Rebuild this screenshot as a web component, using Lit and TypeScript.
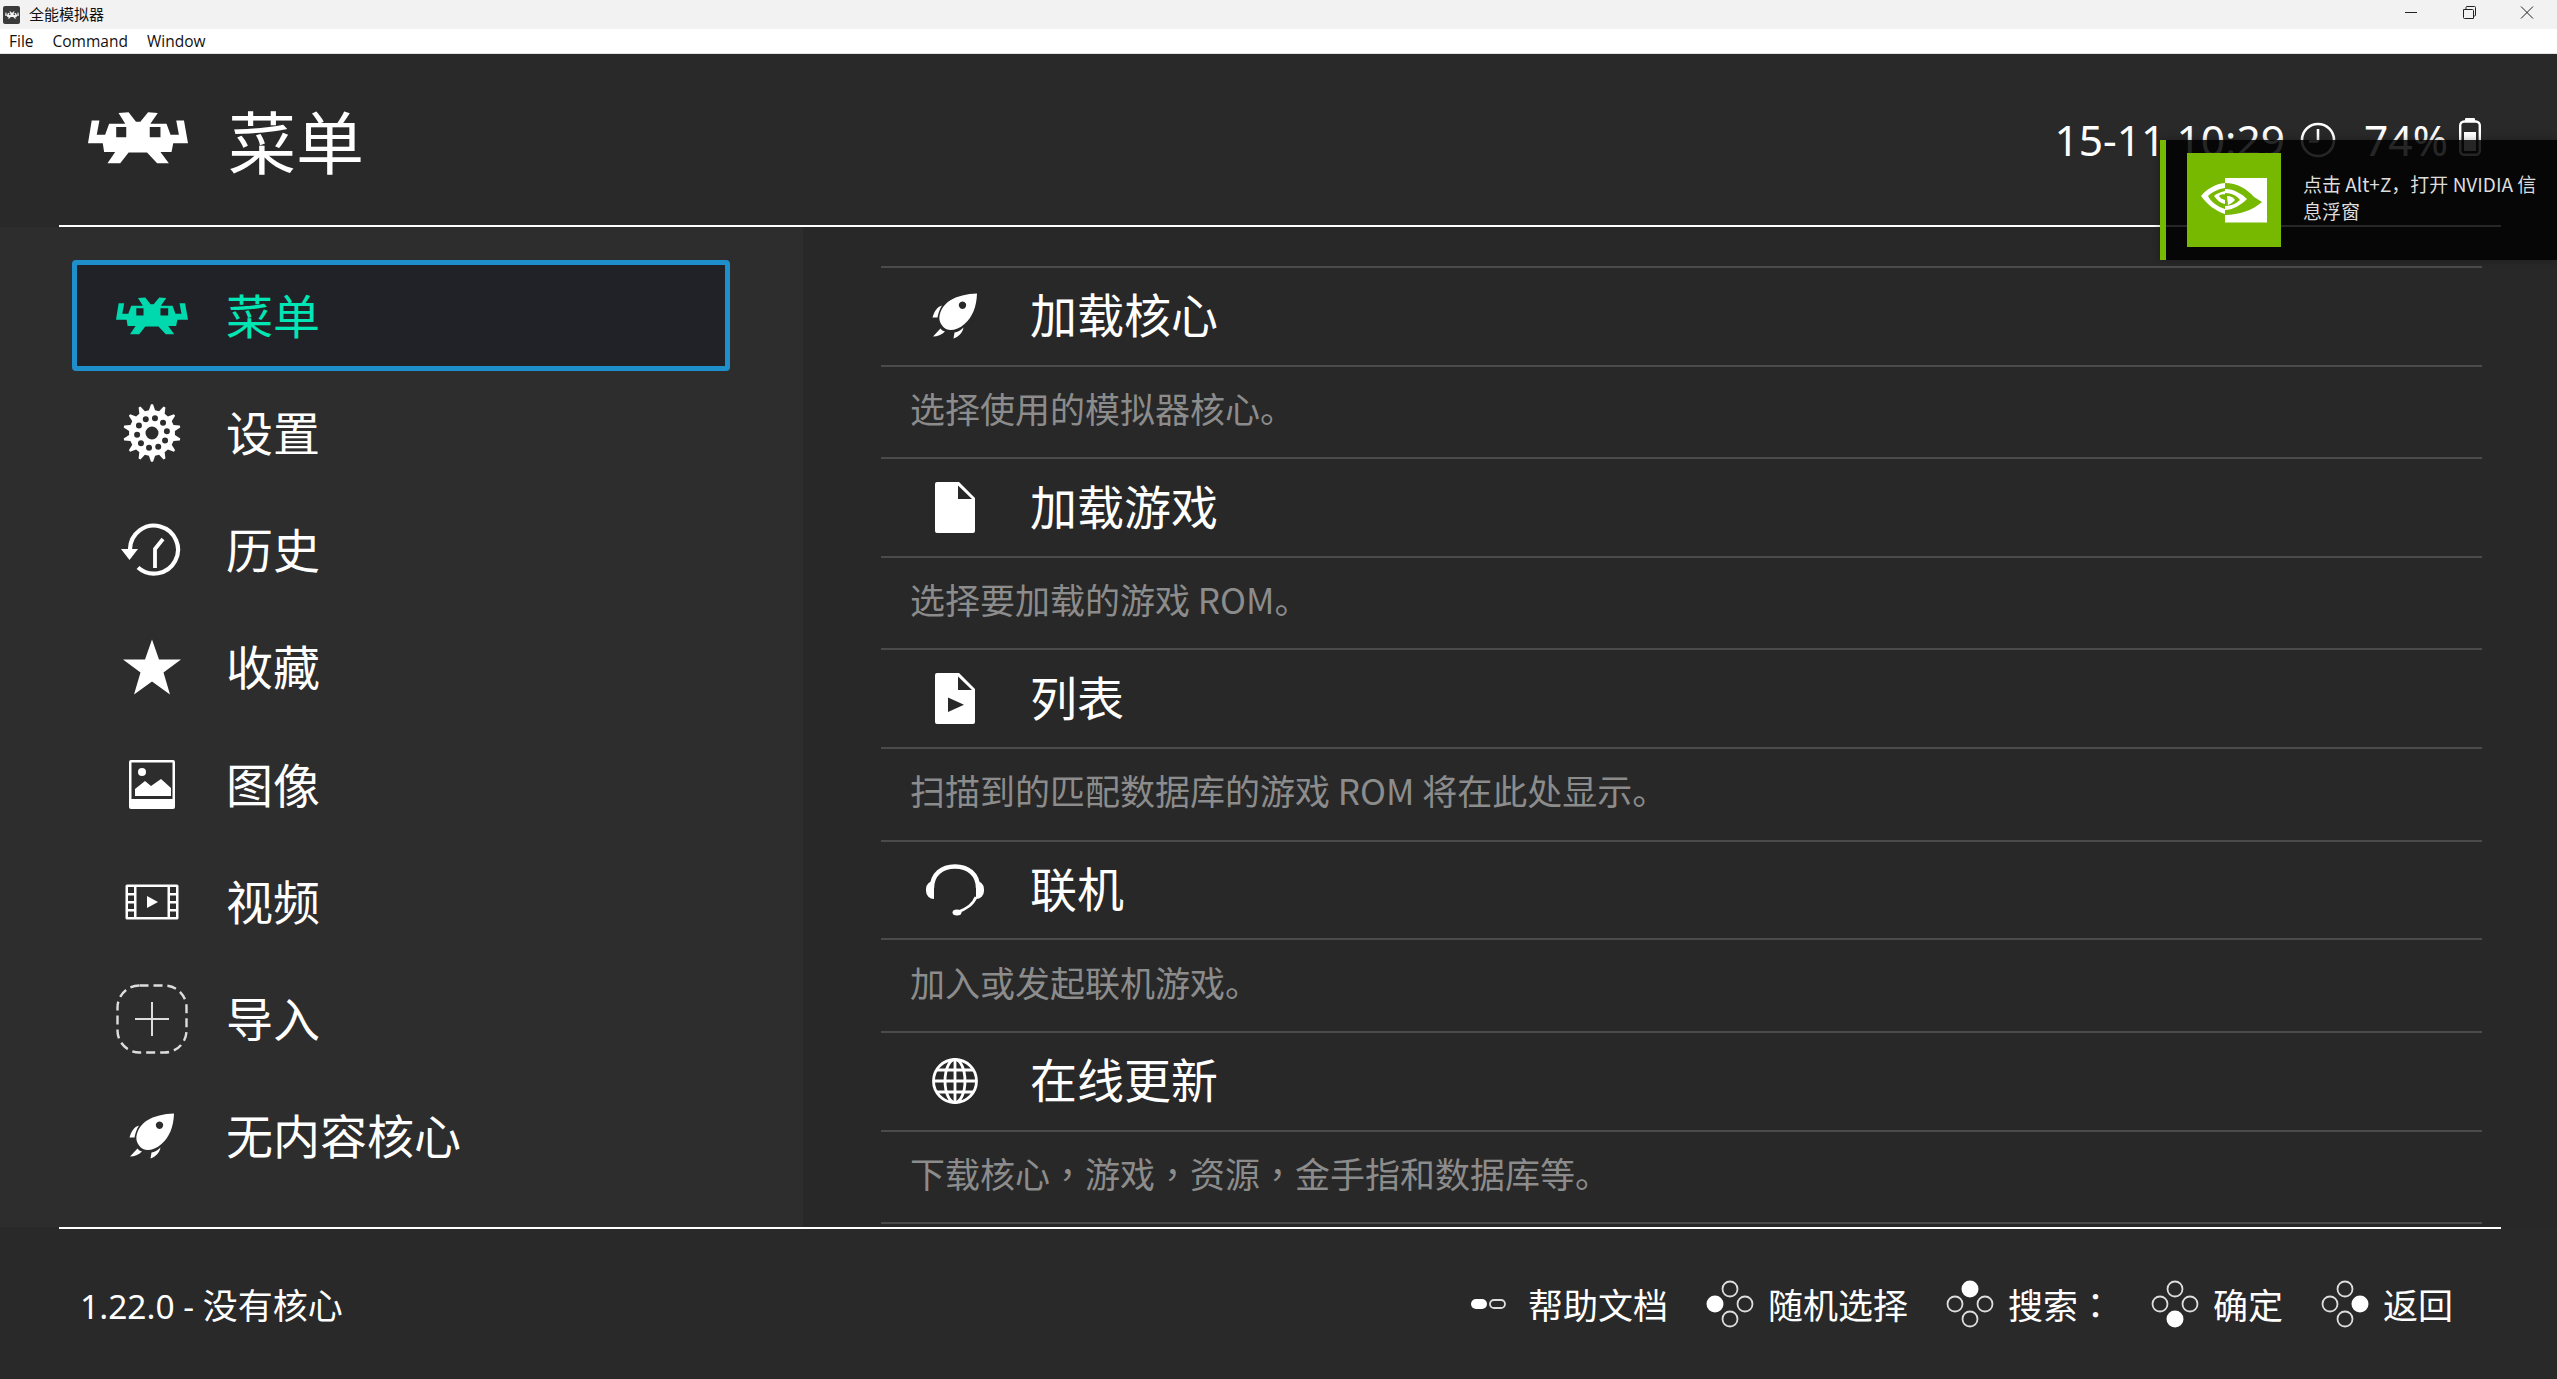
import { LitElement, html, svg, css } from "lit";
import { customElement } from "lit/decorators.js";

const INVADER =
  "M355 340L385 338L407 366H420L443 338L472 340L450 372H498L510 405H535L527 362H550L562 430H518L513 456H480L505 490H470L440 458H385L360 490H322L345 456H312L308 430H264L275 362H298L290 405H315L327 372H375ZM348 382V412H378V382ZM448 382V412H480V382Z";

const invader = (cls: string) => html`<svg class=${cls} viewBox="264 337 298 155" fill="currentColor"><path fill-rule="evenodd" d=${INVADER}></path></svg>`;

function gearPath(): string {
  const cx = 29, cy = 29, teeth = 14;
  let d = "";
  for (let i = 0; i < teeth; i++) {
    const step = (Math.PI * 2) / teeth;
    const a = i * step - Math.PI / 2;
    const pts: [number, number][] = [
      [23, a - step * 0.3],
      [28.8, a - step * 0.08],
      [28.8, a + step * 0.08],
      [23, a + step * 0.3],
    ];
    for (const [r, t] of pts) {
      d += `${d ? "L" : "M"}${(cx + r * Math.cos(t)).toFixed(2)} ${(cy + r * Math.sin(t)).toFixed(2)}`;
    }
  }
  d += "Z";
  const circle = (x: number, y: number, r: number) =>
    `M${(x - r).toFixed(2)} ${y.toFixed(2)}a${r} ${r} 0 1 0 ${2 * r} 0a${r} ${r} 0 1 0 ${-2 * r} 0Z`;
  for (let i = 0; i < 10; i++) {
    const t = (i * Math.PI * 2) / 10 - Math.PI / 2 + 0.2;
    d += circle(cx + 15 * Math.cos(t), cy + 15 * Math.sin(t), 3);
  }
  d += circle(cx, cy, 6.5);
  return d;
}

const rocket = html`<svg class="ic ic46" viewBox="0 0 46 46" fill="currentColor">
  <path fill-rule="evenodd" d="M45 0.5C44.5 14 40.5 24 32.5 31C28 35 23 37 18.5 37C13 37 8.5 32 7.5 27C6.5 20 11 12 18 7.5C25 3 35 0.8 45 0.5ZM30.5 8.5a3.7 3.7 0 1 0 .01 0Z"></path>
  <path d="M10 12.5C5 14 2.5 18 0.5 24.5L5.5 24.5C6 21 7.5 16.5 10 12.5Z"></path>
  <path d="M8.5 35.5L1 43.5C5.5 43.5 9.5 42 13 38.5C11.2 38 9.5 37 8.5 35.5Z"></path>
  <path d="M31.5 34.5C28.5 37.5 25.5 39 22.5 39.5L21.5 45.5C27 43.5 30.5 40 31.5 34.5Z"></path>
</svg>`;

const icons: Record<string, unknown> = {
  invader: invader("ic-inv"),
  gear: html`<svg class="ic ic58" viewBox="0 0 58 58" fill="currentColor"><path fill-rule="evenodd" d=${gearPath()}></path></svg>`,
  history: html`<svg class="ic ic-history" viewBox="0 0 62 56" fill="none" stroke="currentColor">
    <path stroke-width="4.2" d="M9 27A24 24 0 1 1 17 45.5"></path>
    <path stroke-width="3.8" d="M34 46V27L42 17"></path>
    <path fill="currentColor" stroke="none" d="M0 27H17L8.5 38Z"></path>
  </svg>`,
  star: html`<svg class="ic ic-star" viewBox="0 0 58 56" fill="currentColor"><path d="M29 0.5L36 20.5H58L40.5 33.5L47 55.5L29 42.5L11 55.5L17.5 33.5L0 20.500H22Z"></path></svg>`,
  image: html`<svg class="ic ic-image" viewBox="0 0 46 50" fill="currentColor">
    <path fill-rule="evenodd" d="M2 0H44a2 2 0 0 1 2 2V47a2 2 0 0 1-2 2H2a2 2 0 0 1-2-2V2a2 2 0 0 1 2-2ZM2.5 2.5V39H43.5V2.5Z"></path>
    <circle cx="13" cy="12" r="4"></circle>
    <path d="M6 36V29L16 21L22 26L32 19L42 28V36Z"></path>
  </svg>`,
  video: html`<svg class="ic ic-video" viewBox="0 0 54 36" fill="currentColor">
    <path fill-rule="evenodd" d="M2 0.5H52a1.5 1.5 0 0 1 1.5 1.5V34a1.5 1.5 0 0 1-1.5 1.5H2A1.5 1.5 0 0 1 .5 34V2A1.5 1.5 0 0 1 2 .5ZM3 3V9H9V3ZM3 11.5V17H9V11.5ZM3 19.5V25H9V19.5ZM3 27.5V33H9V27.5ZM45 3V9H51V3ZM45 11.5V17H51V11.5ZM45 19.5V25H51V19.5ZM45 27.5V33H51V27.5ZM11.5 3V33H42.5V3Z"></path>
    <path d="M22 12L33 18L22 24Z"></path>
  </svg>`,
  add: html`<svg class="ic ic-add" viewBox="0 0 72 70" fill="none" stroke="#ddd">
    <rect x="1.5" y="1.5" width="69" height="67" rx="22" stroke-width="2.4" stroke-dasharray="9 5"></rect>
    <path stroke-width="2" d="M36 18V52M19 35H53"></path>
  </svg>`,
  rocket,
  file: html`<svg class="ic ic-file" viewBox="0 0 40 51" fill="currentColor"><path fill-rule="evenodd" d="M2 0H24L40 16V49a2 2 0 0 1-2 2H2a2 2 0 0 1-2-2V2a2 2 0 0 1 2-2ZM23 3.5V17H37Z"></path></svg>`,
  fileplay: html`<svg class="ic ic-file" viewBox="0 0 40 51" fill="currentColor"><path fill-rule="evenodd" d="M2 0H24L40 16V49a2 2 0 0 1-2 2H2a2 2 0 0 1-2-2V2a2 2 0 0 1 2-2ZM23 3.5V17H37ZM13 24.5V39L29 31.7Z"></path></svg>`,
  headset: html`<svg class="ic ic-head" viewBox="0 0 58 52" fill="none" stroke="currentColor">
    <path stroke-width="4.4" d="M6 24C6 10 16 2.5 29 2.5C42 2.5 52 10 52 24"></path>
    <path fill="currentColor" stroke="none" d="M8 17a8 8 0 0 0-8 8v2a8 8 0 0 0 8 8ZM50 17a8 8 0 0 1 8 8v2a8 8 0 0 1-8 8Z"></path>
    <path stroke-width="2.8" d="M50 33C47 41 38 46 32 48"></path>
    <ellipse cx="31" cy="48.5" rx="4.500" ry="3" fill="currentColor" stroke="none"></ellipse>
  </svg>`,
  globe: html`<svg class="ic ic46" viewBox="0 0 46 46" fill="none" stroke="currentColor" stroke-width="2.8">
    <circle cx="23" cy="23" r="21.5"></circle>
    <ellipse cx="23" cy="23" rx="10" ry="21.5"></ellipse>
    <path d="M23 1.5V44.5M1.5 23H44.5M4.5 12H41.5M4.5 34H41.500"></path>
  </svg>`,
};

const nav = [
  ["invader", "菜单"],
  ["gear", "设置"],
  ["history", "历史"],
  ["star", "收藏"],
  ["image", "图像"],
  ["video", "视频"],
  ["add", "导入"],
  ["rocket", "无内容核心"],
];

const rows = [
  ["rocket", "加载核心", "选择使用的模拟器核心。"],
  ["file", "加载游戏", "选择要加载的游戏 ROM。"],
  ["fileplay", "列表", "扫描到的匹配数据库的游戏 ROM 将在此处显示。"],
  ["headset", "联机", "加入或发起联机游戏。"],
  ["globe", "在线更新", "下载核心，游戏，资源，金手指和数据库等。"],
];

/* The reference draws fullwidth commas and colons centred in the cell, as the TC face does. */
const centrePunct = (t: string) =>
  t.split(/([，：])/).map((p) => (p === "，" || p === "：" ? html`<span class="punct">${p}</span>` : p));

const dpad = (on: number) => {
  const pts = [[24, 9], [9, 24], [39, 24], [24, 39]];
  return html`<svg class="dpad" viewBox="0 0 48 48">
    ${pts.map(([x, y], i) => svg`<circle cx=${x} cy=${y} r=${i === on ? 8.5 : 7.5} fill=${i === on ? "#fff" : "none"} stroke="#ddd" stroke-width=${i === on ? 0 : 1.8}></circle>`)}
  </svg>`;
};

const hints: [number, string][] = [
  [1, "随机选择"],
  [0, "搜索："],
  [3, "确定"],
  [2, "返回"],
];

@customElement("app-root")
export class AppRoot extends LitElement {
  static styles = css`
    :host {
      display: block;
      width: 100%;
      height: 1379px;
      overflow: hidden;
      font-family: "Noto Sans CJK SC", "Noto Sans", sans-serif;
      background: #292929;
      color: #fff;
    }
    .root { position: relative; display: flex; flex-direction: column; height: 1379px; }
    .titlebar {
      flex: 0 0 29px; height: 29px; box-sizing: border-box; background: #f2f2f2; color: #111;
      display: flex; align-items: center; padding: 0 0 2px 3px; font-size: 15px;
    }
    .appicon {
      width: 17px; height: 18px; border-radius: 2px; background: #3a3a3a; color: #f2f2f2;
      display: flex; align-items: center; justify-content: center; margin: 2px 9px 0 0;
    }
    .appicon svg { width: 14px; height: 8px; display: block; }
    .controls { margin: 2px 0 0 auto; display: flex; padding-right: 1px; }
    .controls svg { display: block; width: 58px; height: 29px; }
    .menubar {
      flex: 0 0 25px; height: 25px; box-sizing: border-box; background: #fff; color: #111;
      border-bottom: 1px solid #e4e4e4;
      display: flex; align-items: center; gap: 19px; padding-left: 9px;
      font: 15.5px/24px "Open Sans", "Noto Sans", sans-serif;
    }
    .header {
      flex: 0 0 171px; height: 171px; display: flex; align-items: center;
      padding: 0 76px 0 88px; box-sizing: border-box;
    }
    .ic-logo { width: 100px; height: 52px; display: block; margin: 0 40px 3px 0; }
    .title { font-size: 68px; line-height: 80px; }
    .status {
      margin-left: auto; display: flex; align-items: center;
      font: 42.5px/50px "Noto Sans", sans-serif; color: #fff;
    }
    .status svg { display: block; }
    .clock { width: 36px; height: 38px; margin: 0 28px 0 15px; }
    .batt { width: 22px; height: 38px; margin-left: 11px; position: relative; top: -3px; }
    .rule { flex: 0 0 2px; height: 2px; margin: 0 56px 0 59px; background: #fff; }
    .body { flex: 0 0 1000px; height: 1000px; display: flex; overflow: hidden; }
    .side {
      flex: 0 0 803px; width: 803px; box-sizing: border-box; background: #2d2d2d;
      padding: 30px 0 0 72px;
    }
    .nav {
      width: 658px; height: 117.3px; box-sizing: border-box; display: flex; align-items: center;
      font-size: 47px; color: #fff;
    }
    .nav.sel {
      height: 111px; margin: 3px 0; background: #212227; color: #00e6b4;
      border: 5px solid #1f8fcc; border-radius: 4px;
    }
    .nav .slot { width: 72px; margin-left: 44px; display: flex; justify-content: center; align-items: center; margin-right: 38px; flex: none; }
    .nav.sel .slot { margin-left: 39px; }
    .nav .label { line-height: 60px; padding-bottom: 4px; }
    .ic-inv { width: 73px; height: 38px; display: block; }
    .nav.sel .ic-inv { color: #00d9ae; }
    .ic { display: block; flex: none; }
    .ic46 { width: 46px; height: 46px; }
    .ic58 { width: 58px; height: 58px; }
    .ic-history { width: 62px; height: 56px; }
    .ic-star { width: 58px; height: 56px; }
    .ic-image { width: 46px; height: 50px; }
    .ic-video { width: 54px; height: 36px; }
    .ic-add { width: 72px; height: 70px; }
    .ic-file { width: 40px; height: 51px; }
    .ic-head { width: 58px; height: 52px; }
    .content { flex: 1; padding: 39px 75px 0 78px; min-width: 0; background: #282828; }
    .row-title {
      height: 98.6px; box-sizing: border-box; border-top: 2px solid #4b4b4b;
      display: flex; align-items: center; font-size: 47px; line-height: 60px; color: #fff;
    }
    .row-title .slot { width: 149px; display: flex; justify-content: center; flex: none; box-sizing: border-box; padding-right: 1px; }
    .row-title .text { padding-bottom: 6px; }
    .row-desc {
      height: 92.65px; box-sizing: border-box; border-top: 2px solid #4b4b4b;
      display: flex; align-items: center; padding: 0 0 8px 29px; font-size: 35px; line-height: 50px; color: #8c8c8c;
      white-space: pre;
    }
    .punct { font-family: "Noto Sans CJK TC", "Noto Sans", sans-serif; }
    .list-end { border-top: 2px solid #4b4b4b; }
    .footer {
      flex: 1; display: flex; align-items: center; padding: 0 104px 1px 80px;
      font-size: 35px; line-height: 48px;
    }
    .version { font-size: 35px; padding-top: 3px; }
    .version .num { font: 33.5px/48px "Noto Sans", sans-serif; }
    .hints { margin-left: auto; display: flex; align-items: center; gap: 38px; color: #fff; }
    .hint { display: flex; align-items: center; gap: 14px; }
    .dpad { width: 48px; height: 48px; display: block; }
    .pills { width: 36px; height: 48px; display: block; margin-right: 8px; }
    .toast {
      position: absolute; right: 0; top: 140px; width: 397px; height: 120px; box-sizing: border-box;
      background: rgba(0, 0, 0, 0.85); border-left: 6px solid #76b900;
      display: flex; align-items: center; padding-left: 21px;
      box-shadow: 0 0 8px rgba(0, 0, 0, 0.3);
    }
    .nv { width: 94px; height: 94px; background: #76b900; flex: none; display: block; }
    .toast-text { margin-left: 22px; width: 245px; font-size: 19px; line-height: 26.5px; color: #ddd; padding-bottom: 5px; }
  `;

  render() {
    return html`
      <div class="root">
        <div class="titlebar">
          <span class="appicon">${invader("")}</span>
          <span>全能模拟器</span>
          <div class="controls">
            <svg viewBox="0 0 58 29" fill="none" stroke="#222" stroke-width="1"><path d="M23 12.5H35"></path></svg>
            <svg viewBox="0 0 58 29" fill="none" stroke="#222" stroke-width="1"><path d="M23.5 9.5H32.5a1 1 0 0 1 1 1V18.5H24.5a1 1 0 0 1-1-1ZM26 9.5V7.5a1 1 0 0 1 1-1H34.5a1 1 0 0 1 1 1V15a1 1 0 0 1-1 1H33.5"></path></svg>
            <svg viewBox="0 0 58 29" fill="none" stroke="#222" stroke-width="1"><path d="M23 6.5L35 18.5M35 6.5L23 18.5"></path></svg>
          </div>
        </div>
        <div class="menubar"><span>File</span><span>Command</span><span>Window</span></div>
        <div class="header">
          ${invader("ic-logo")}
          <div class="title">菜单</div>
          <div class="status">
            <span>15-11 10:29</span>
            <svg class="clock" viewBox="0 0 36 38" fill="none" stroke="#fff" stroke-width="2.6">
              <circle cx="18" cy="19" r="16"></circle><path d="M18 8V20.5M9 20.5H18"></path>
            </svg>
            <span>74%</span>
            <svg class="batt" viewBox="0 0 22 38">
              <rect x="1.2" y="3.5" width="19.6" height="33.3" rx="4" fill="none" stroke="#fff" stroke-width="2.4"></rect>
              <rect x="6" y="0" width="10" height="3.5" rx="1" fill="#fff"></rect>
              <rect x="5" y="14" width="12" height="19" fill="#fff"></rect>
            </svg>
          </div>
        </div>
        <div class="rule"></div>
        <div class="body">
          <div class="side">
            ${nav.map(([ic, label], i) => html`
              <div class="nav ${i === 0 ? "sel" : ""}">
                <span class="slot">${icons[ic]}</span>
                <span class="label">${label}</span>
              </div>`)}
          </div>
          <div class="content">
            ${rows.map(([ic, t, d]) => html`
              <div class="row-title"><span class="slot">${icons[ic]}</span><span class="text">${t}</span></div>
              <div class="row-desc"><span>${centrePunct(d)}</span></div>`)}
            <div class="list-end"></div>
          </div>
        </div>
        <div class="rule"></div>
        <div class="footer">
          <div class="version"><span class="num">1.22.0 - </span>没有核心</div>
          <div class="hints">
            <div class="hint">
              <svg class="pills" viewBox="0 0 36 48">
                <rect x="1" y="19" width="16" height="10" rx="5" fill="#fff"></rect>
                <rect x="20" y="20" width="15" height="8" rx="4" fill="none" stroke="#ddd" stroke-width="1.8"></rect>
              </svg>
              <span>帮助文档</span>
            </div>
            ${hints.map(([on, t]) => html`<div class="hint">${dpad(on)}<span>${centrePunct(t)}</span></div>`)}
          </div>
        </div>
        <div class="toast">
          <svg class="nv" viewBox="0 0 94 94">
            <rect x="38" y="25" width="42" height="44.500" fill="#fff"></rect>
            <path fill="#76b900" d="M38 30C50 30 60 36 67 44L75 49C66 57 52 62 38 62Z"></path>
            <path fill="#fff" d="M38 36C47 36 55 41 60 46C54 52 46 57 38 57V53C44 53 50 50 53 47C50 43 45 40 38 40Z"></path>
            <path fill="#fff" d="M40 43C44 43 47 45 48 47C46 49 44 51 41 52Z"></path>
            <path fill="#fff" d="M38 30C27 31 19 37 14 43C20 51 28 58 38 61V56C31 54 24 49 21 43C25 39 31 36 38 35Z"></path>
            <path fill="#fff" d="M38 38C33 39 29 41 27 43C30 47 33 50 38 51V47C35 46 33 45 32 43C33 42 35 41 38 41.500Z"></path>
          </svg>
          <div class="toast-text">点击 Alt+Z，打开 NVIDIA 信息浮窗</div>
        </div>
      </div>
    `;
  }
}
